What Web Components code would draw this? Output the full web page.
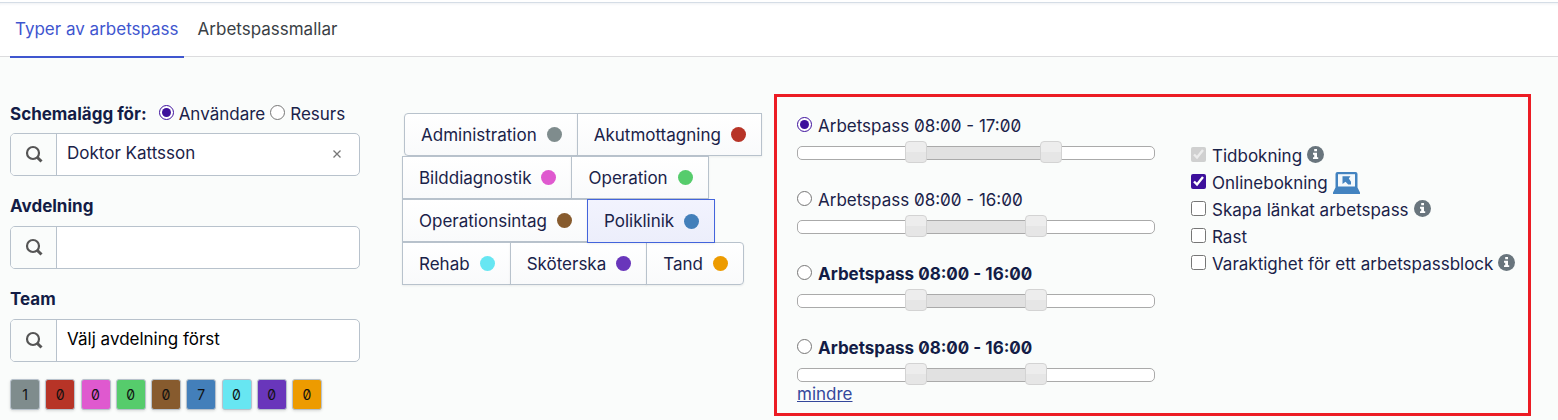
<!DOCTYPE html>
<html lang="sv">
<head>
<meta charset="utf-8">
<title>Typer av arbetspass</title>
<style>
  html { background: #fafcfb; }
  body {
    margin: 0;
    font: 400 17px/24px Inter, "Liberation Sans", sans-serif;
    font-feature-settings: "zero";
    color: #1a2249;
    --line: #b8c2cc;
    --accent: #3d109c;
    --link: #3f56cf;
    --heading: #131c46;
  }
</style>
</head>
<body>
<schedule-page></schedule-page>
<script>
class BaseElement extends HTMLElement {
  connectedCallback() {
    if (this.shadowRoot) return;
    const root = this.attachShadow({ mode: "open" });
    const template = document.createElement("template");
    template.innerHTML = "<style>*{box-sizing:border-box}" + this.css() + "</style>" + this.html();
    root.append(template.content.cloneNode(true));
    this.ready(root);
  }
  ready() {}
}

customElements.define("tab-bar", class extends BaseElement {
  css() { return `
    :host { display: block; background: #fff; border-bottom: 1px solid #dcdcde; padding-top: 2px; }
    nav { display: flex; gap: 9px; padding: 0 10px; height: 54px; border-top: 1px solid #d5dde6; box-shadow: inset 0 3px 3px -2px #eef0f3; }
    ::slotted(a) { box-sizing: border-box; height: 55px; padding: 14px 5px 0; text-decoration: none; border-bottom: 2px solid transparent; }
    ::slotted(a[aria-current]) { border-color: var(--link); }`; }
  html() { return `<nav><slot></slot></nav>`; }
});

customElements.define("search-field", class extends BaseElement {
  css() { return `
    :host { display: block; }
    .box { display: flex; height: 43px; border: 1px solid var(--line); border-radius: 5px; background: #fff; overflow: hidden; }
    .find { flex: none; width: 46px; border: 0; border-right: 1px solid var(--line); background: #fafcfb; padding: 0; display: grid; place-items: center; }
    input { flex: 1; min-width: 0; border: 0; outline: 0; background: none; font: inherit; color: inherit; padding: 0 10px 4px; }
    .clear { border: 0; background: none; width: 44px; padding: 0 0 2px; display: grid; place-items: center; }
    svg { display: block; }`; }
  html() { return `
    <div class="box">
      <button class="find" type="button" aria-label="Sök">
        <svg width="20" height="20" viewBox="0 0 20 20" fill="none" stroke="#555" stroke-width="2.200"><circle cx="9" cy="8" r="6"/><path d="M13.200 12.200 17.500 16.500" stroke-width="3"/></svg>
      </button>
      <input type="text" aria-label="${this.getAttribute("label")}" value="${this.getAttribute("value") || ""}">
      ${this.hasAttribute("clearable") ? `<button class="clear" type="button" aria-label="Rensa"><svg width="10" height="10" viewBox="0 0 10 10" stroke="#777" stroke-width="1.300"><path d="M1.500 1.500l7 7M8.500 1.500l-7 7"/></svg></button>` : ""}
    </div>`; }
  ready(root) {
    const clear = root.querySelector(".clear");
    if (clear) clear.onclick = () => { root.querySelector("input").value = ""; };
  }
});

customElements.define("count-badge", class extends BaseElement {
  css() { return `
    :host { display: block; }
    button { display: block; width: 30px; height: 31px; padding: 0; border: 1px solid var(--line); border-radius: 3px; background: ${this.getAttribute("color")}; color: #111; font: 14px/29px Inter, sans-serif; font-feature-settings: "zero"; box-shadow: 0 1px 3px #0002; }`; }
  html() { return `<button type="button"><slot></slot></button>`; }
});

customElements.define("type-button", class extends BaseElement {
  css() { return `
    :host { display: block; margin-right: -1px; }
    button { display: flex; align-items: center; gap: 10px; height: 43px; padding: 0 15px 0 16px; border: 1px solid var(--line); border-radius: var(--corners, 0); background: linear-gradient(#fff, #f9fafb); color: inherit; font: inherit; box-shadow: 0 1px 2px #0001; white-space: nowrap; }
    button[aria-pressed=true] { height: 44px; background: linear-gradient(#f2f3fe, #eceefb); border-color: #4364dc; }
    i { width: 15px; height: 15px; border-radius: 50%; background: ${this.getAttribute("color")}; }
    :host([selected]) { position: relative; z-index: 1; }`; }
  html() { return `<button type="button" aria-pressed="${this.hasAttribute("selected")}"><slot></slot><i></i></button>`; }
});

customElements.define("shift-range", class extends BaseElement {
  css() { return `
    :host { display: block; height: 74px; }
    label { display: flex; align-items: center; gap: 6px; height: 24px; }
    :host([strong]) label { font-weight: 700; color: var(--heading); }
    label input { width: 15px; height: 15px; margin: 0 0 3px; accent-color: var(--accent); }
    .track { position: relative; height: 14px; margin-top: 8px; border: 1px solid #aaa; border-radius: 5px; background: #fff; }
    .span { height: 12px; margin-left: calc(var(--from) / 24 * 100%); width: calc((var(--to) - var(--from)) / 24 * 100%); background: #e1e1e1; }
    .track input { position: absolute; left: -12px; top: -6px; width: calc(100% + 24px); height: 22px; margin: 0; appearance: none; background: none; pointer-events: none; }
    .track input::-webkit-slider-runnable-track { height: 22px; background: none; }
    .track input::-webkit-slider-thumb { appearance: none; width: 22px; height: 22px; border: 1px solid #d3d3d3; border-radius: 4px; background: linear-gradient(#ededed 50%, #e6e6e6 50%); pointer-events: auto; }`; }
  html() {
    const from = this.getAttribute("from"), to = this.getAttribute("to");
    return `
    <label><input type="radio" name="shift" ${this.hasAttribute("checked") ? "checked" : ""}><span><slot></slot></span></label>
    <div class="track" style="--from:${from};--to:${to}">
      <div class="span"></div>
      <input type="range" aria-label="Start" min="0" max="24" value="${from}">
      <input type="range" aria-label="Slut" min="0" max="24" value="${to}">
    </div>`; }
  ready(root) {
    const track = root.querySelector(".track");
    const [start, end] = track.querySelectorAll("input");
    start.oninput = () => track.style.setProperty("--from", start.value);
    end.oninput = () => track.style.setProperty("--to", end.value);
    root.querySelector("[type=radio]").onchange = () => {
      for (const other of this.parentNode.querySelectorAll("shift-range"))
        if (other !== this) other.shadowRoot.querySelector("[type=radio]").checked = false;
    };
  }
});

customElements.define("option-check", class extends BaseElement {
  css() { return `
    :host { display: flex; align-items: center; gap: 5px; height: 27px; white-space: nowrap; }
    label { display: flex; align-items: center; gap: 6px; }
    input { width: 15px; height: 15px; margin: 0 0 3px; accent-color: var(--accent); }`; }
  html() { return `
    <label><input type="checkbox" ${this.hasAttribute("checked") ? "checked" : ""} ${this.hasAttribute("disabled") ? "disabled" : ""}><span><slot></slot></span></label><slot name="icon"></slot>`; }
});

customElements.define("info-icon", class extends BaseElement {
  css() { return `:host { display: block; padding-bottom: 3px; } svg { display: block; }`; }
  html() { return `<svg width="17" height="17" viewBox="0 0 17 17" role="img" aria-label="Information"><circle cx="8.500" cy="8.500" r="8.500" fill="#69757d"/><path fill="#fff" d="M7.200 3h2.800v2.300H7.200zM6 6.800h4v4.400h1.200v1.900H6v-1.900h1.200V8.700H6z"/></svg>`; }
});

customElements.define("laptop-icon", class extends BaseElement {
  css() { return `:host { display: block; } svg { display: block; }`; }
  html() { return `<svg width="27" height="22" viewBox="0 0 27 22" role="img" aria-label="Online"><path fill="#4383c0" d="M4.500 0h18a2 2 0 0 1 2 2v13.500L27 20.500V22H0v-1.500l2.500-5V2a2 2 0 0 1 2-2z"/><path fill="#f4f9fc" d="M5 2.200h17v12.300H5z"/><path fill="#4383c0" d="M9.500 4.300h8l-1.700 2.200 2.200 3.300v2.700h-2.800l-2.700-2.700-3 2.200z"/></svg>`; }
});

customElements.define("schedule-page", class extends BaseElement {
  css() { return `
    :host { display: block; }
    main { display: flex; align-items: flex-start; padding: 37px 27px 0 10px; }
    .filters { flex: none; width: 350px; padding-top: 8px; }
    .who { display: flex; align-items: center; height: 24px; margin-bottom: 7px; white-space: nowrap; }
    .who b { margin-right: 12px; }
    .who label { display: flex; align-items: center; gap: 5px; margin-right: 5px; }
    .who input { width: 15px; height: 15px; margin: 0 0 4px; accent-color: var(--accent); }
    b, h3 { font-weight: 700; font-size: 17px; color: var(--heading); }
    h3 { margin: 18px 0 8px; line-height: 24px; }
    .team { color: #000; }
    .counts { display: flex; justify-content: space-between; width: 312px; margin-top: 17px; }
    .types { flex: none; width: 358px; margin: 19px 14px 0 42px; }
    .row { display: flex; height: 43px; }
    .row:first-child { padding-left: 2px; }
    .first { --corners: 4px 0 0 4px; }
    .last { --corners: 0 4px 4px 0; }
    .shifts { flex: 1; min-width: 0; display: grid; grid-template-columns: minmax(0, 1fr) 323px; gap: 36px; border: 3px solid #ec1c24; padding: 17px 14px 7px 20px; }
    .options { padding-top: 28px; }
    .more { height: 24px; margin-top: -28px; position: relative; }
    a { color: #3a3f45; }
    a[aria-current] { color: var(--link); }
    .more a { color: #34479b; }`; }
  html() { return `
    <tab-bar><a href="#typer" aria-current="page">Typer av arbetspass</a><a href="#mallar">Arbetspassmallar</a></tab-bar>
    <main>
      <section class="filters">
        <div class="who"><b>Schemalägg för:</b>
          <label><input type="radio" name="who" checked>Användare</label>
          <label><input type="radio" name="who">Resurs</label></div>
        <search-field label="Användare" value="Doktor Kattsson" clearable></search-field>
        <h3>Avdelning</h3>
        <search-field label="Avdelning"></search-field>
        <h3>Team</h3>
        <search-field class="team" label="Team" value="Välj avdelning först"></search-field>
        <div class="counts">
          <count-badge color="#7f8c8d">1</count-badge><count-badge color="#b73427">0</count-badge><count-badge color="#df59cf">0</count-badge><count-badge color="#56cc6c">0</count-badge><count-badge color="#875b2e">0</count-badge><count-badge color="#437fba">7</count-badge><count-badge color="#67e6f2">0</count-badge><count-badge color="#6936bb">0</count-badge><count-badge color="#ed9b00">0</count-badge>
        </div>
      </section>
      <section class="types">
        <div class="row"><type-button class="first" color="#7f8c8d">Administration</type-button><type-button color="#b73427">Akutmottagning</type-button></div>
        <div class="row"><type-button color="#df59cf">Bilddiagnostik</type-button><type-button color="#56cc6c">Operation</type-button></div>
        <div class="row"><type-button color="#875b2e">Operationsintag</type-button><type-button color="#437fba" selected>Poliklinik</type-button></div>
        <div class="row"><type-button color="#67e6f2">Rehab</type-button><type-button color="#6936bb">Sköterska</type-button><type-button class="last" color="#ed9b00">Tand</type-button></div>
      </section>
      <section class="shifts">
        <div>
          <shift-range from="8" to="17" checked>Arbetspass 08:00 - 17:00</shift-range>
          <shift-range from="8" to="16">Arbetspass 08:00 - 16:00</shift-range>
          <shift-range from="8" to="16" strong>Arbetspass 08:00 - 16:00</shift-range>
          <shift-range from="8" to="16" strong>Arbetspass 08:00 - 16:00</shift-range>
          <div class="more"><a href="#mindre">mindre</a></div>
        </div>
        <div class="options">
          <option-check checked disabled>Tidbokning<info-icon slot="icon"></info-icon></option-check>
          <option-check checked>Onlinebokning<laptop-icon slot="icon"></laptop-icon></option-check>
          <option-check>Skapa länkat arbetspass<info-icon slot="icon"></info-icon></option-check>
          <option-check>Rast</option-check>
          <option-check>Varaktighet för ett arbetspassblock<info-icon slot="icon"></info-icon></option-check>
        </div>
      </section>
    </main>`; }
});
</script>
</body>
</html>
